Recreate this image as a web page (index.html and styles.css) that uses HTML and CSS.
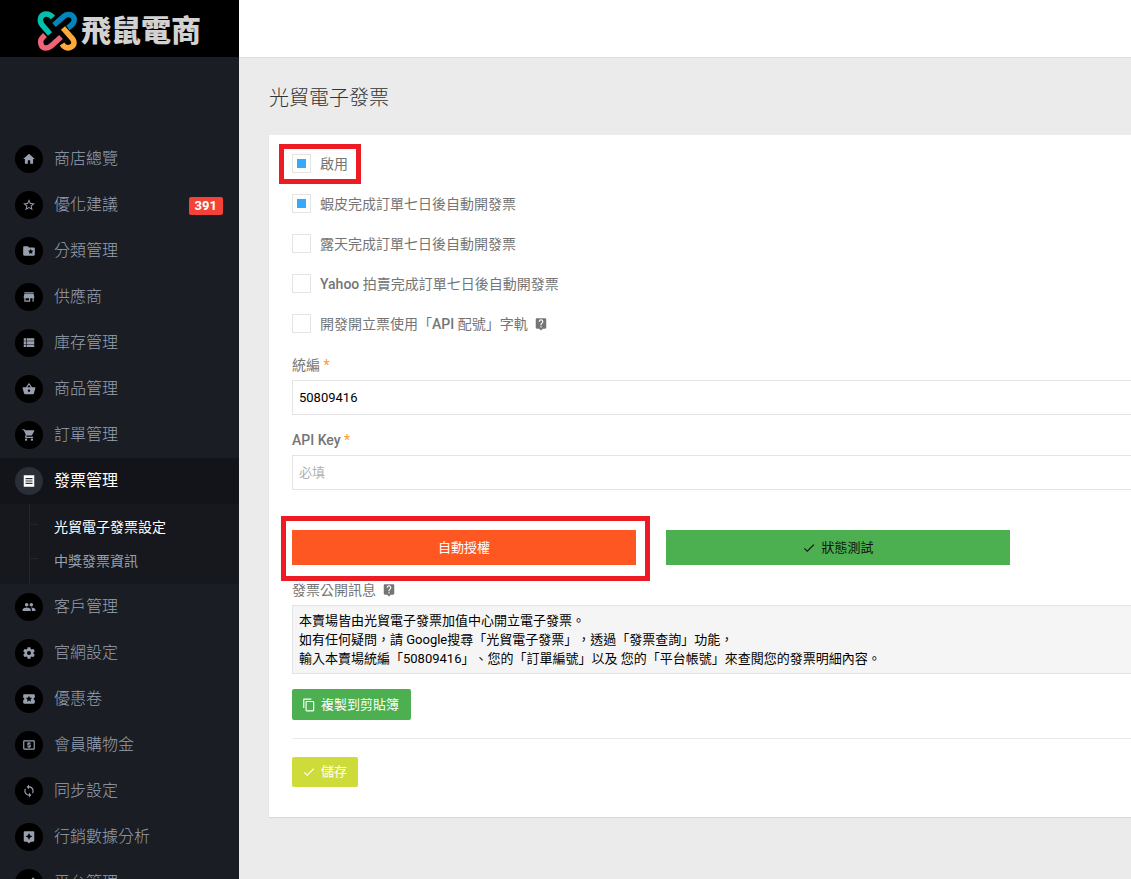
FILE: index.html
```html
<!DOCTYPE html>
<html lang="zh-TW">
<head>
<meta charset="utf-8">
<title>光貿電子發票</title>
<link rel="stylesheet" href="styles.css">
</head>
<body>
<svg class="sprite" aria-hidden="true">
  <symbol id="help" viewBox="0 0 24 24"><path d="M19 2H5c-1.11 0-2 .9-2 2v14c0 1.1.89 2 2 2h4l3 3 3-3h4c1.1 0 2-.9 2-2V4c0-1.1-.9-2-2-2zm-6 16h-2v-2h2v2zm2.07-7.75l-.9.92C13.45 11.9 13 12.5 13 14h-2v-.5c0-1.1.45-2.1 1.17-2.83l1.24-1.26c.37-.36.59-.86.59-1.41 0-1.1-.9-2-2-2s-2 .9-2 2H8c0-2.21 1.79-4 4-4s4 1.79 4 4c0 .88-.36 1.68-.93 2.25z"/></symbol>
  <symbol id="check" viewBox="0 0 24 24"><path d="M9 16.17L4.83 12l-1.42 1.41L9 19 21 7l-1.41-1.41z"/></symbol>
</svg>
<div class="app">
  <aside class="sidebar">
    <a class="brand" href="#">
      <svg class="brand-mark" viewBox="0 0 40 40" fill="none" stroke-width="5.500">
        <path stroke="#04bfad" d="M16 6.500 C12 1.500 6 2 4 6 C2.500 10 4 13 6 15 L13 23"/>
        <path stroke="#0386bd" d="M17 14 L26 6 C30 2 35 3 37 7 C38 11 36 13 31 17"/>
        <path stroke="#ffa936" d="M26 17 L34 26 C38 30 38 34 34 36 C30 38 27 36 25 33"/>
        <path stroke="#ee6378" d="M24 26 L14 35 C10 38 5 38 4 33 C3 29 4 28 8 24"/>
      </svg>
      <span class="brand-name">飛鼠電商</span>
    </a>
    <nav class="menu">
      <a class="item" href="#"><span class="dot"><svg viewBox="0 0 24 24"><path d="M10 20v-6h4v6h5v-8h3L12 3 2 12h3v8z"/></svg></span>商店總覽</a>
      <a class="item" href="#"><span class="dot"><svg viewBox="0 0 24 24"><path d="M12 15.39L8.24 17.66L9.23 13.38L5.91 10.5L10.29 10.13L12 6.09L13.71 10.13L18.09 10.5L14.77 13.38L15.76 17.66M22 9.24L14.81 8.63L12 2L9.19 8.63L2 9.24L7.45 13.97L5.82 21L12 17.27L18.18 21L16.54 13.97L22 9.24Z"/></svg></span>優化建議<span class="badge">391</span></a>
      <a class="item" href="#"><span class="dot"><svg viewBox="0 0 24 24"><path d="M20 6h-8l-2-2H4c-1.1 0-1.99.9-1.99 2L2 18c0 1.1.9 2 2 2h16c1.1 0 2-.9 2-2V8c0-1.1-.9-2-2-2zm-2.06 11L15 15.28 12.06 17l.78-3.33-2.59-2.24 3.41-.29L15 8l1.34 3.14 3.41.29-2.59 2.24.78 3.33z"/></svg></span>分類管理</a>
      <a class="item" href="#"><span class="dot"><svg viewBox="0 0 24 24"><path d="M20 4H4v2h16V4zm1 10v-2l-1-5H4l-1 5v2h1v6h10v-6h4v6h2v-6h1zm-9 4H6v-4h6v4z"/></svg></span>供應商</a>
      <a class="item" href="#"><span class="dot"><svg viewBox="0 0 24 24"><path d="M3 4h4v4H3zM8 4h13v4H8zM3 9h4v5H3zM8 9h13v5H8zM3 15h4v4H3zM8 15h13v4H8z"/></svg></span>庫存管理</a>
      <a class="item" href="#"><span class="dot"><svg viewBox="0 0 24 24"><path d="M17.21 9l-4.38-6.56c-.19-.28-.51-.42-.83-.42-.32 0-.64.14-.83.43L6.79 9H2c-.55 0-1 .45-1 1 0 .09.01.18.04.27l2.54 9.27c.23.84 1 1.46 1.92 1.46h13c.92 0 1.69-.62 1.93-1.46l2.54-9.27L23 10c0-.55-.45-1-1-1h-4.79zM9 9l3-4.4L15 9H9zm3 8c-1.1 0-2-.9-2-2s.9-2 2-2 2 .9 2 2-.9 2-2 2z"/></svg></span>商品管理</a>
      <a class="item" href="#"><span class="dot"><svg viewBox="0 0 24 24"><path d="M7 18c-1.1 0-1.99.9-1.99 2S5.9 22 7 22s2-.9 2-2-.9-2-2-2zM1 2v2h2l3.6 7.59-1.35 2.45c-.16.28-.25.61-.25.96 0 1.1.9 2 2 2h12v-2H7.42c-.14 0-.25-.11-.25-.25l.03-.12.9-1.63h7.45c.75 0 1.41-.41 1.75-1.03l3.58-6.49A1 1 0 0 0 20 4H5.21l-.94-2H1zm16 16c-1.1 0-1.99.9-1.99 2s.89 2 1.99 2 2-.9 2-2-.9-2-2-2z"/></svg></span>訂單管理</a>
      <a class="item active" href="#"><span class="dot"><svg viewBox="0 0 24 24"><path fill-rule="evenodd" d="M3 2h18v20H3zM6 7v2h12V7zM6 11v2h12v-2zM6 15v2h12v-2z"/></svg></span>發票管理</a>
      <div class="submenu">
        <a class="subitem current" href="#">光貿電子發票設定</a>
        <a class="subitem" href="#">中獎發票資訊</a>
      </div>
      <a class="item" href="#"><span class="dot"><svg viewBox="0 0 24 24"><path d="M16 11c1.66 0 2.99-1.34 2.99-3S17.66 5 16 5s-3 1.34-3 3 1.34 3 3 3zm-8 0c1.66 0 2.99-1.34 2.99-3S9.66 5 8 5 5 6.34 5 8s1.34 3 3 3zm0 2c-2.33 0-7 1.17-7 3.5V19h14v-2.5c0-2.33-4.67-3.5-7-3.5zm8 0c-.29 0-.62.02-.97.05 1.16.84 1.97 1.97 1.97 3.45V19h6v-2.5c0-2.33-4.67-3.5-7-3.5z"/></svg></span>客戶管理</a>
      <a class="item" href="#"><span class="dot"><svg viewBox="0 0 24 24"><path d="M19.43 12.98c.04-.32.07-.64.07-.98s-.03-.66-.07-.98l2.11-1.65c.19-.15.24-.42.12-.64l-2-3.46c-.12-.22-.39-.3-.61-.22l-2.49 1c-.52-.4-1.08-.73-1.69-.98l-.38-2.65A.488.488 0 0 0 14 2h-4c-.25 0-.46.18-.49.42l-.38 2.65c-.61.25-1.17.59-1.69.98l-2.49-1c-.23-.09-.49 0-.61.22l-2 3.46c-.13.22-.07.49.12.64l2.11 1.65c-.04.32-.07.65-.07.98s.03.66.07.98l-2.11 1.65c-.19.15-.24.42-.12.64l2 3.46c.12.22.39.3.61.22l2.49-1c.52.4 1.08.73 1.69.98l.38 2.65c.03.24.24.42.49.42h4c.25 0 .46-.18.49-.42l.38-2.65c.61-.25 1.17-.59 1.69-.98l2.49 1c.23.09.49 0 .61-.22l2-3.46c.12-.22.07-.49-.12-.64l-2.11-1.65zM12 15.5a3.5 3.5 0 1 1 0-7 3.5 3.5 0 0 1 0 7z"/></svg></span>官網設定</a>
      <a class="item" href="#"><span class="dot"><svg viewBox="0 0 24 24"><path d="M20 12c0-1.1.9-2 2-2V6c0-1.1-.9-2-2-2H4c-1.1 0-1.99.9-1.99 2v4c1.1 0 1.99.9 1.99 2s-.89 2-2 2v4c0 1.1.9 2 2 2h16c1.1 0 2-.9 2-2v-4c-1.1 0-2-.9-2-2zm-4.42 4.8L12 14.5l-3.58 2.3 1.08-4.12-3.29-2.69 4.24-.25L12 5.8l1.54 3.95 4.24.25-3.29 2.69 1.09 4.11z"/></svg></span>優惠卷</a>
      <a class="item" href="#"><span class="dot"><svg viewBox="0 0 24 24"><path d="M11 17h2v-1h1c.55 0 1-.45 1-1v-3c0-.55-.45-1-1-1h-3v-1h4V8h-2V7h-2v1h-1c-.55 0-1 .45-1 1v3c0 .55.45 1 1 1h3v1H9v2h2v1zm9-13H4c-1.11 0-1.99.89-1.99 2L2 18c0 1.11.89 2 2 2h16c1.11 0 2-.89 2-2V6c0-1.11-.89-2-2-2zm0 14H4V6h16v12z"/></svg></span>會員購物金</a>
      <a class="item" href="#"><span class="dot"><svg viewBox="0 0 24 24"><path d="M12 4V1L8 5l4 4V6c3.31 0 6 2.69 6 6 0 1.01-.25 1.97-.7 2.8l1.46 1.46A7.93 7.93 0 0 0 20 12c0-4.42-3.58-8-8-8zm0 14c-3.31 0-6-2.69-6-6 0-1.01.25-1.97.7-2.8L5.24 7.74A7.93 7.93 0 0 0 4 12c0 4.42 3.58 8 8 8v3l4-4-4-4v3z"/></svg></span>同步設定</a>
      <a class="item" href="#"><span class="dot"><svg viewBox="0 0 24 24"><path d="M19 2H5a2 2 0 0 0-2 2v14c0 1.1.9 2 2 2h4l3 3 3-3h4c1.1 0 2-.9 2-2V4c0-1.1-.9-2-2-2zm-5.12 10.88L12 17l-1.88-4.12L6 11l4.12-1.88L12 5l1.88 4.12L18 11l-4.12 1.88z"/></svg></span>行銷數據分析</a>
      <a class="item" href="#"><span class="dot"><svg viewBox="0 0 24 24"><path d="M17 3h4v18H3v-4L17 5z"/></svg></span>平台管理</a>
    </nav>
  </aside>
  <div class="page">
    <header class="topbar"></header>
    <main class="content">
      <h1 class="title">光貿電子發票</h1>
      <form class="card">
        <div class="options">
          <label class="option marked"><input class="tick" type="checkbox" checked><span>啟用</span></label>
          <label class="option"><input class="tick" type="checkbox" checked><span>蝦皮完成訂單七日後自動開發票</span></label>
          <label class="option"><input class="tick" type="checkbox"><span>露天完成訂單七日後自動開發票</span></label>
          <label class="option"><input class="tick" type="checkbox"><span><span class="latin">Yahoo</span> 拍賣完成訂單七日後自動開發票</span></label>
          <label class="option"><input class="tick" type="checkbox"><span>開發開立票使用「<span class="latin">API</span> 配號」字軌<svg class="help"><use href="#help"/></svg></span></label>
        </div>
        <div class="field">
          <label class="label" for="tax">統編 <span class="required">*</span></label>
          <input class="control" id="tax" type="text" value="50809416">
        </div>
        <div class="field">
          <label class="label" for="key"><span class="latin">API Key</span> <span class="required">*</span></label>
          <input class="control" id="key" type="text" placeholder="必填">
        </div>
        <div class="actions">
          <div class="action marked-action"><button class="wide authorize" type="button">自動授權</button></div>
          <div class="action"><button class="wide test" type="button"><svg class="glyph"><use href="#check"/></svg>狀態測試</button></div>
        </div>
        <div class="field">
          <label class="label" for="notice">發票公開訊息<svg class="help"><use href="#help"/></svg></label>
          <textarea class="control notice" id="notice" rows="3" readonly>本賣場皆由光貿電子發票加值中心開立電子發票。
如有任何疑問，請 Google搜尋「光貿電子發票」，透過「發票查詢」功能，
輸入本賣場統編「50809416」、您的「訂單編號」以及 您的「平台帳號」來查閱您的發票明細內容。</textarea>
        </div>
        <button class="button copy" type="button"><svg class="glyph" viewBox="0 0 24 24"><path d="M16 1H4c-1.1 0-2 .9-2 2v14h2V3h12V1zm3 4H8c-1.1 0-2 .9-2 2v14c0 1.1.9 2 2 2h11c1.1 0 2-.9 2-2V7c0-1.1-.9-2-2-2zm0 16H8V7h11v14z"/></svg>複製到剪貼簿</button>
        <hr class="rule">
        <button class="button save" type="submit"><svg class="glyph"><use href="#check"/></svg>儲存</button>
      </form>
    </main>
  </div>
</div>
</body>
</html>
```

FILE: styles.css
```css
* { box-sizing: border-box; }

body {
  margin: 0;
  background: #ebebeb;
  color: #757575;
  font-family: Roboto, "Noto Sans CJK TC", sans-serif;
  font-size: 14px;
  line-height: 20px;
  text-spacing-trim: space-all;
}

a { color: inherit; text-decoration: none; }
svg { fill: currentColor; flex: none; }
button, input, textarea { font-family: inherit; text-spacing-trim: inherit; }

.sprite { display: none; }

.app { display: flex; height: 100vh; overflow: hidden; }

.sidebar {
  flex: 0 0 239px;
  overflow: hidden;
  background: #1a1d24;
  color: #98a0b0;
}

.brand {
  display: flex;
  align-items: center;
  gap: 4px;
  height: 57px;
  padding: 5px 0 0 37px;
  background: #000;
}
.brand-mark { width: 40px; height: 40px; fill: none; }
.brand-name {
  color: #d2d2d2;
  font-size: 30px;
  font-weight: 900;
  line-height: 40px;
}

.menu { padding-top: 79px; }

.item {
  display: flex;
  align-items: center;
  gap: 11px;
  height: 46px;
  padding: 0 16px 0 15px;
  font-size: 16px;
  font-weight: 300;
}
.item.active { background: #131419; color: #fff; font-weight: 400; }

.dot {
  display: grid;
  place-items: center;
  width: 28px;
  height: 28px;
  border-radius: 50%;
  background: #000;
}
.dot svg { width: 14px; height: 14px; }
.active .dot { background: #2a2e37; }

.badge {
  margin-top: 2px;
  margin-left: auto;
  padding: 0 6px;
  border-radius: 2px;
  background: #f44336;
  color: #fff;
  font-size: 13px;
  font-weight: 700;
  line-height: 18px;
}

.submenu { position: relative; padding: 6px 0; background: #16181d; }
.submenu::before {
  content: "";
  position: absolute;
  top: 0;
  bottom: 0;
  left: 29px;
  border-left: 1px solid #22252d;
}
.subitem {
  display: block;
  position: relative;
  padding: 7px 0 7px 54px;
}
.subitem::before {
  content: "";
  position: absolute;
  top: 14px;
  left: 30px;
  width: 8px;
  border-top: 1px solid #22252d;
}
.subitem.current { color: #fff; }

.page { flex: 1; min-width: 0; overflow: auto; }
.topbar { height: 58px; background: #fff; border-bottom: 1px solid #dcdcdc; }
.content { padding-left: 30px; }

.title {
  margin: 0;
  padding: 25px 0 22px;
  color: #333;
  font-size: 20px;
  font-weight: 300;
  line-height: 30px;
}

.card {
  padding: 9px 0 30px 23px;
  background: #fff;
  box-shadow: 0 1px 1px #d8d8d8;
}

.options { display: flex; flex-direction: column; align-items: flex-start; margin-bottom: 11px; }
.option { display: flex; align-items: center; gap: 9px; height: 40px; position: relative; }

.tick {
  appearance: none;
  display: grid;
  place-items: center;
  width: 19px;
  height: 19px;
  margin: 0 0 1px;
  border: 1px solid #e4e4e4;
  background: #fff;
}
.tick:checked::before { content: ""; width: 9px; height: 9px; background: #36a9fc; }

.marked::after, .marked-action::after {
  content: "";
  position: absolute;
  border: 5px solid #ed1c24;
  pointer-events: none;
}
.marked::after { inset: 0 -13px; }
.marked-action::after { inset: -14px -14px -16px -11px; }

.help { width: 14px; height: 14px; margin-left: 6px; vertical-align: -2px; }
.latin { font-weight: 500; }

.field { margin-bottom: 15px; }
.label { display: block; margin-bottom: 5px; }
.required { color: #ff9c33; }

.control {
  display: block;
  width: 100%;
  height: 35px;
  padding: 5px 6px;
  border: 1px solid #e4e4e4;
  border-right: 0;
  border-radius: 0;
  background: #fff;
  color: #000;
  font-size: 13px;
  line-height: 19px;
}
.control::placeholder { color: #b0b0b0; opacity: 1; }
.notice { height: auto; resize: none; overflow: hidden; background: #f5f5f5; }

.actions { display: flex; gap: 30px; padding: 25px 0 15px; }
.action { flex: 0 1 344px; position: relative; }

.wide, .button {
  display: flex;
  align-items: center;
  justify-content: center;
  gap: 5px;
  border: 0;
  color: #fff;
  font-size: 13px;
  line-height: 19px;
}
.wide { width: 100%; height: 35px; padding: 0; }
.authorize { background: #ff5722; }
.test { background: #4caf50; color: #111; }

.button { padding: 6px 12px 6px 10px; border-radius: 2px; }
.glyph { width: 14px; height: 14px; }
.copy { background: #4caf50; }
.save { padding-top: 5px; padding-right: 11px; background: #cddc39; }

.rule { height: 1px; margin: 18px 0; border: 0; background: #eaeaea; }
```
